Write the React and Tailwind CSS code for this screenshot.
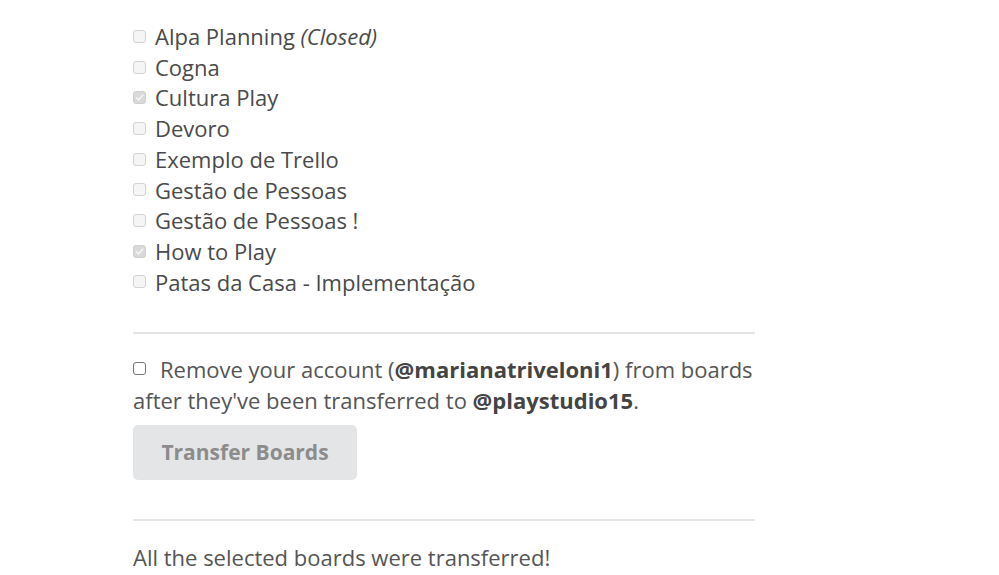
import React from "react";

const boards = [
  { name: "Alpa Planning", closed: true, checked: false },
  { name: "Cogna", checked: false },
  { name: "Cultura Play", checked: true },
  { name: "Devoro", checked: false },
  { name: "Exemplo de Trello", checked: false },
  { name: "Gestão de Pessoas", checked: false },
  { name: "Gestão de Pessoas !", checked: false },
  { name: "How to Play", checked: true },
  { name: "Patas da Casa - Implementação", checked: false },
];

const BoxIcon = ({ checked, disabled }) => {
  let tone = "border-[#767676] bg-white";
  if (disabled) tone = "border-[#d3d3d3] bg-[#f5f5f5]";
  if (checked) tone = "border-[#d0d0d0] bg-[#d9d9d9]";
  return (
    <span
      className={`inline-flex items-center justify-center w-[13px] h-[13px] rounded-[3px] border shrink-0 ${tone}`}
    >
      {checked && (
        <svg viewBox="0 0 12 12" className="w-[11px] h-[11px]">
          <path
            d="M2.6 6.3 L5 8.6 L9.5 3.5"
            fill="none"
            stroke="#f4f4f4"
            strokeWidth="1.8"
            strokeLinecap="round"
            strokeLinejoin="round"
          />
        </svg>
      )}
    </span>
  );
};

export default function App() {
  return (
    <div
      className="min-h-[575px] bg-white text-[#4a4a4a] pl-[133px] pt-[21px]"
      style={{ fontFamily: '"Open Sans", "Liberation Sans", sans-serif' }}
    >
      <div className="w-[622px]">
        <ul className="text-[22px] leading-[30.7px]">
          {boards.map((b) => (
            <li key={b.name} className="flex items-center gap-[9px]">
              <BoxIcon checked={b.checked} disabled />
              <span>
                {b.name}
                {b.closed && <em className="italic"> (Closed)</em>}
              </span>
            </li>
          ))}
        </ul>

        <div className="mt-[35px] border-t-2 border-[#e4e4e4]" />

        <p className="mt-[20px] text-[22px] leading-[31px] text-[#555]">
          <span className="inline-flex align-[3px] mr-[14px]">
            <BoxIcon />
          </span>
          Remove your account (<b className="font-bold text-[#444]">@marianatriveloni1</b>) from boards
          after they've been transferred to <b className="font-bold text-[#444]">@playstudio15</b>.
        </p>

        <button
          type="button"
          className="mt-[9px] w-[224px] h-[55px] rounded-[5px] bg-[#e4e5e7] text-[#8c8c8c] text-[21px] font-bold"
        >
          Transfer Boards
        </button>

        <div className="mt-[39px] border-t-2 border-[#e4e4e4]" />

        <p className="mt-[21px] text-[22px] leading-[31px] text-[#555]">
          All the selected boards were transferred!
        </p>
      </div>
    </div>
  );
}
